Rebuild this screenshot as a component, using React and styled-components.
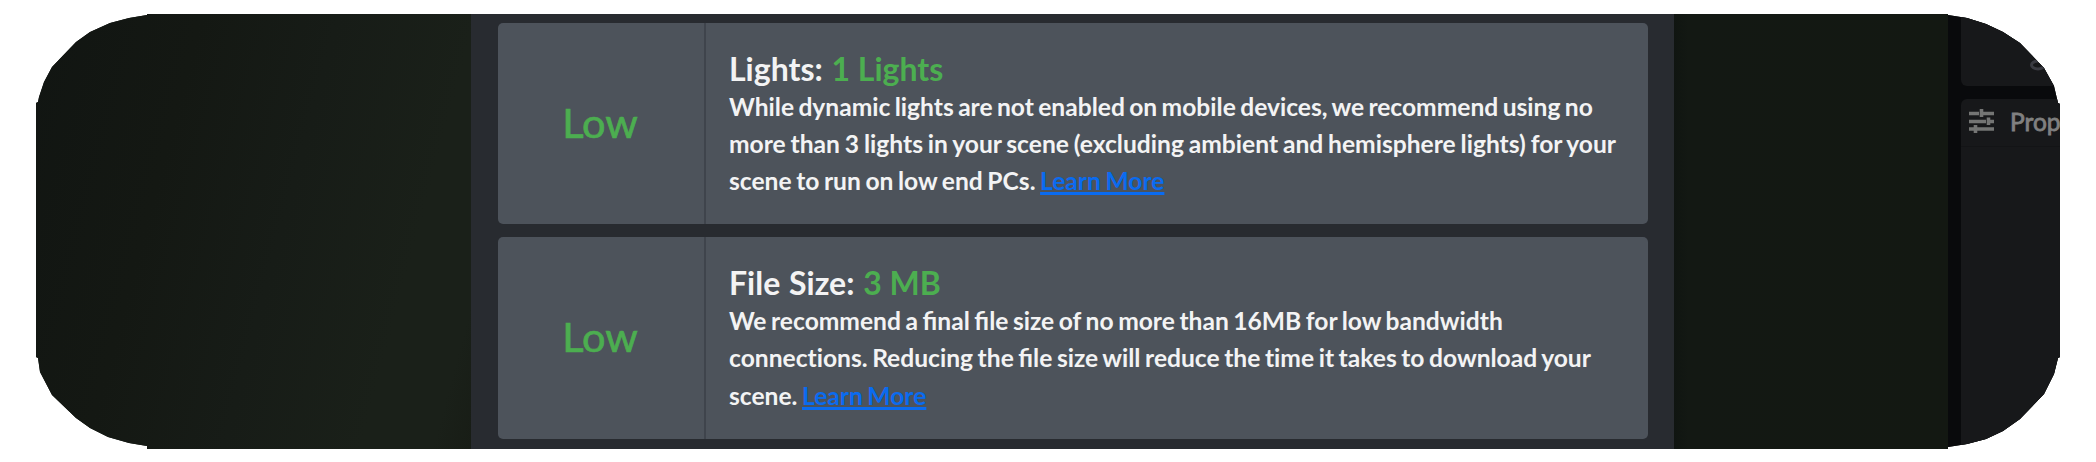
import React from "react";
import styled, { createGlobalStyle } from "styled-components";

const GlobalStyle = createGlobalStyle`
  body { margin: 0; background: #fff; }
  * { box-sizing: border-box; }
`;

const Page = styled.div`
  width: 2096px;
  height: 462px;
  padding: 14px 36px 13px;
  background: #fff;
  overflow: hidden;
  font-family: Lato, "Liberation Sans", sans-serif;
`;

const Editor = styled.main`
  display: flex;
  width: 2024px;
  height: 435px;
  overflow: hidden;
  background: #131813;
  clip-path: polygon(
    111px 0, 111px 1px, 93px 4px, 74px 9px, 54px 18px, 40px 28px, 16px 53px, 8px 68px, 3px 83px, 2px 88px, 0 89px,
    0 343px, 2px 344px, 4px 358px, 16px 381px, 40px 404px, 54px 414px, 72px 423px, 93px 429px, 111px 432px, 111px 435px,
    1912px 435px, 1912px 433px, 1931px 430px, 1950px 425px, 1967px 417px, 1984px 405px, 2008px 380px, 2018px 360px, 2022px 344px, 2024px 343px,
    2024px 90px, 2022px 89px, 2018px 72px, 2008px 54px, 1984px 29px, 1967px 18px, 1950px 10px, 1931px 4px, 1912px 1px, 1912px 0
  );
`;

const Viewport = styled.section`
  flex: none;
  width: 435px;
  background: linear-gradient(105deg, #111512 0%, #141813 30%, #171c17 55%, #1a2019 80%, #1a2019 93%, #181d16 100%);
`;

const ViewportEdge = styled.section`
  flex: none;
  width: 274px;
  background: linear-gradient(90deg, #101511 0, #131813 14px, #131812 100%);
`;

const Dialog = styled.section`
  flex: none;
  display: flex;
  flex-direction: column;
  gap: 13px;
  width: 1203px;
  padding: 8.6px 26px 0 27px;
  background: #282b30;
`;

const Card = styled.article`
  display: flex;
  flex: none;
  height: 201.6px;
  border-radius: 5px;
  background: #4d535b;
`;

const Rating = styled.div`
  display: flex;
  align-items: center;
  justify-content: center;
  width: 208px;
  padding: 0 2px 3px 0;
  border-right: 2px solid #3f444c;
  color: #4cae50;
  font-size: 41.5px;
  line-height: 48px;
  -webkit-text-stroke: 0.7px #4cae50;
`;

const Details = styled.div`
  flex: 1;
  padding: 27px 0 0 23px;
  color: #f3f3f4;
  white-space: nowrap;
`;

const Title = styled.h6`
  margin: 0;
  font-size: 32px;
  font-weight: 700;
  line-height: 37px;
  word-spacing: 1px;
`;

const Value = styled.span`
  color: #4cae50;
  word-spacing: 0;
`;

const Text = styled.p`
  margin: 0;
  padding-top: 1px;
  font-size: 24.6px;
  font-weight: 700;
  line-height: 37.2px;
`;

const Line = styled.span`
  display: block;
  width: max-content;
  word-spacing: ${(p) => p.$gap || -1.4}px;
`;

const Plain = styled.span`
  font-variant-ligatures: none;
`;

const LearnMore = styled.a`
  color: #0a6bf0;
  text-decoration: underline 2.5px;
  text-decoration-skip-ink: none;
`;

const Sidebar = styled.aside`
  flex: none;
  display: flex;
  flex-direction: column;
  gap: 13px;
  width: 112px;
  padding-left: 13px;
  background: #090a0c;
`;

const UpperPanel = styled.div`
  display: flex;
  align-items: flex-end;
  height: 72px;
  padding: 0 0 15px 69px;
  border-radius: 0 0 0 6px;
  background: #17181a;
`;

const Properties = styled.div`
  flex: 1;
  border-radius: 6px 0 0 0;
  background: #17181a;
`;

const PanelHeader = styled.div`
  display: flex;
  align-items: center;
  gap: 16px;
  height: 48px;
  padding: 0 0 2px 8px;
  border-bottom: 1px solid #131416;
  color: #808080;
  font-size: 24.5px;
  font-weight: 400;
  -webkit-text-stroke: 0.8px #808080;
  white-space: nowrap;
`;

const Sliders = styled.svg`
  flex: none;
  margin-bottom: 2px;
`;

const SlidersIcon = () => (
  <Sliders width="25" height="24" viewBox="0 0 25 24" fill="none" stroke="#747574" strokeWidth="3.6">
    <path d="M0 4.5H10M13 4.5H25M12.5 0V8M0 12.5H17M20 12.5H25M19.5 8.5V16M0 20H5M8 20H25M6.5 16V24" />
  </Sliders>
);

const RingIcon = () => (
  <svg width="17" height="12" viewBox="0 0 17 12" fill="none" stroke="#3a3b42" strokeWidth="3">
    <ellipse cx="8" cy="6" rx="6.5" ry="4" />
  </svg>
);

export default function App() {
  return (
    <Page>
      <GlobalStyle />
      <Editor>
        <Viewport />
        <Dialog>
          <Card>
            <Rating>Low</Rating>
            <Details>
              <Title>Lights: <Value>1 Lights</Value></Title>
              <Text>
                <Line $gap={-1.6}>While dynamic lights are not enabled on mobile devices, we recommend using no</Line>
                <Line $gap={-1.1}>more than 3 lights in your scene (excluding ambient and hemisphere lights) for your</Line>
                <Line>scene to run on low end PCs. <LearnMore>Learn More</LearnMore></Line>
              </Text>
            </Details>
          </Card>
          <Card>
            <Rating>Low</Rating>
            <Details>
              <Title>File Size: <Value>3 MB</Value></Title>
              <Text>
                <Line>We recommend a final file size of no more than 16MB for low bandwidth</Line>
                <Line>connec<Plain>ti</Plain>ons. Reducing the file size will reduce the <Plain>ti</Plain>me it takes to download your</Line>
                <Line>scene. <LearnMore>Learn More</LearnMore></Line>
              </Text>
            </Details>
          </Card>
        </Dialog>
        <ViewportEdge />
        <Sidebar>
          <UpperPanel><RingIcon /></UpperPanel>
          <Properties>
            <PanelHeader><SlidersIcon />Prop</PanelHeader>
          </Properties>
        </Sidebar>
      </Editor>
    </Page>
  );
}
